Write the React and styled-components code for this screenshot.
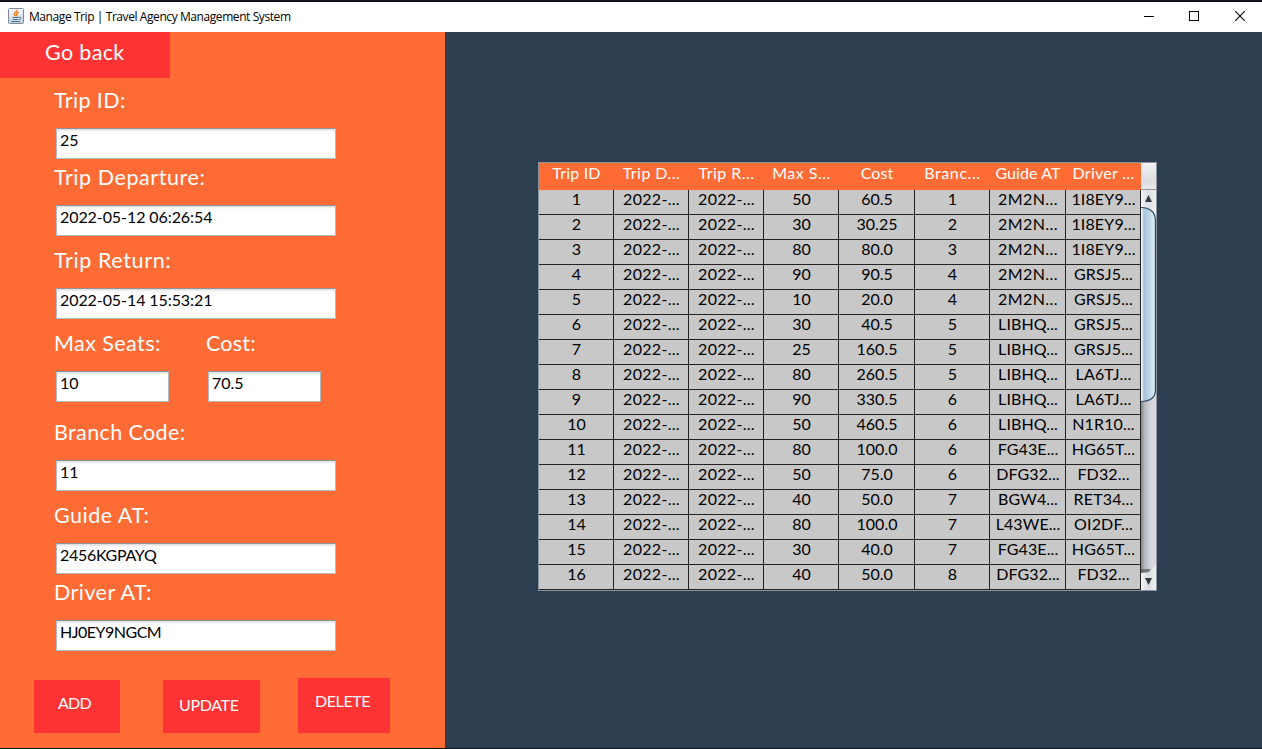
import React from "react";
import styled, { createGlobalStyle } from "styled-components";

const Global = createGlobalStyle`
  * { box-sizing: border-box; }
  body { margin: 0; overflow: hidden; background: #0d1018; }
`;

const Window = styled.div`
  width: 1262px;
  height: 749px;
  padding: 2px 0 1px;
  background: #10121b;
  display: flex;
  flex-direction: column;
  font-family: Lato, "Open Sans", sans-serif;
`;

const TitleBar = styled.header`
  height: 30px;
  flex: none;
  background: #fff;
  display: flex;
  align-items: flex-start;
  padding: 6px 0 0 8px;
`;

const Title = styled.div`
  flex: 1;
  margin: 1px 0 0 5px;
  font: 12px/16px "Open Sans", sans-serif;
  letter-spacing: ${(p) => p.$spacing}px;
  color: #000;
  white-space: pre;
`;

const WindowButton = styled.div`
  width: ${(p) => p.$w}px;
  height: 16px;
  display: flex;
  align-items: center;
`;

const Body = styled.main`
  flex: 1;
  min-height: 0;
  display: flex;
`;

const FormPanel = styled.section`
  width: 445px;
  background: #ff6b35;
`;

const TablePanel = styled.section`
  flex: 1;
  background: #2d3e50;
  padding: 130px 0 0 93px;
`;

const Button = styled.div`
  width: ${(p) => p.$w}px;
  height: ${(p) => p.$h}px;
  padding: ${(p) => p.$pad};
  background: #ff3333;
  color: #fff;
  font-size: ${(p) => p.$size || 16}px;
  line-height: ${(p) => (p.$size ? 28 : 20)}px;
  letter-spacing: ${(p) => p.$spacing || 0}px;
  white-space: pre;
`;

const Form = styled.div`
  padding: 8px 0 0 56px;
`;

const Line = styled.div`
  display: flex;
  gap: 39px;
  margin-bottom: ${(p) => p.$after || 0}px;
`;

const Field = styled.div`
  width: ${(p) => p.$w}px;
`;

const Label = styled.div`
  height: 42px;
  margin-left: -2px;
  font-size: 21.5px;
  line-height: 28px;
  letter-spacing: ${(p) => p.$spacing || 0}px;
  color: #fff;
  white-space: pre;
`;

const Input = styled.div`
  height: 31px;
  padding: 1px 3px;
  border: 1px solid #b4babf;
  border-top: 1px solid #8e9499;
  background: linear-gradient(#d9dadb 0, #f5f5f5 2px, #fff 3px);
  font-size: 16px;
  line-height: 20px;
  letter-spacing: ${(p) => p.$spacing || 0}px;
  color: #000;
  white-space: pre;
`;

const Actions = styled.div`
  display: flex;
  align-items: flex-end;
  height: 82px;
  padding-left: 34px;
`;

const Spacer = styled.div`
  width: ${(p) => p.$w}px;
`;

const ScrollPane = styled.div`
  width: 619px;
  height: 429px;
  border: 1px solid #8f949b;
  display: flex;
`;

const Table = styled.div`
  width: 602px;
`;

const Row = styled.div`
  display: grid;
  grid-template-columns: 75px 75px 75px 75px 76px 75px 76px 75px;
`;

const HeadCell = styled.div`
  height: 27px;
  background: #ff6b35;
  color: #fff;
  font-size: 16px;
  line-height: 20px;
  letter-spacing: ${(p) => p.$spacing || 0}px;
  text-align: center;
  white-space: pre;
`;

const Cell = styled.div`
  height: 25px;
  padding-left: 1px;
  background: #c8c8c8;
  border-right: 1px solid #222;
  border-bottom: 1px solid #222;
  color: #000;
  font-size: 16px;
  line-height: 18px;
  letter-spacing: ${(p) => p.$spacing || 0}px;
  text-align: center;
  white-space: pre;
`;

const ScrollColumn = styled.div`
  width: 15px;
  display: flex;
  flex-direction: column;
`;

const Corner = styled.div`
  height: 27px;
  background: linear-gradient(#f3f3f5, #dcdde1 70%, #e9eaed);
  border-bottom: 1px solid #8f949b;
`;

const heads = [
  ["Trip ID", 0.2],
  ["Trip D...", 0.45],
  ["Trip R...", 0.45],
  ["Max S...", 0.5],
  ["Cost", 0.1],
  ["Branc...", 0.6],
  ["Guide AT", 0.1],
  ["Driver ...", 0.3],
];

const trips = [
  ["50", "60.5", "1", "2M2N...", "1I8EY9..."],
  ["30", "30.25", "2", "2M2N...", "1I8EY9..."],
  ["80", "80.0", "3", "2M2N...", "1I8EY9..."],
  ["90", "90.5", "4", "2M2N...", "GRSJ5..."],
  ["10", "20.0", "4", "2M2N...", "GRSJ5..."],
  ["30", "40.5", "5", "LIBHQ...", "GRSJ5..."],
  ["25", "160.5", "5", "LIBHQ...", "GRSJ5..."],
  ["80", "260.5", "5", "LIBHQ...", "LA6TJ..."],
  ["90", "330.5", "6", "LIBHQ...", "LA6TJ..."],
  ["50", "460.5", "6", "LIBHQ...", "N1R10..."],
  ["80", "100.0", "6", "FG43E...", "HG65T..."],
  ["50", "75.0", "6", "DFG32...", "FD32..."],
  ["40", "50.0", "7", "BGW4...", "RET34..."],
  ["80", "100.0", "7", "L43WE...", "OI2DF..."],
  ["30", "40.0", "7", "FG43E...", "HG65T..."],
  ["40", "50.0", "8", "DFG32...", "FD32..."],
];

function TextField({ label, value, w = 280, ls, vs }) {
  return (
    <Field $w={w}>
      <Label $spacing={ls}>{label}</Label>
      <Input $spacing={vs}>{value}</Input>
    </Field>
  );
}

function JavaIcon() {
  return (
    <svg width="16" height="16" viewBox="0 0 16 16">
      <defs>
        <linearGradient id="tile" x1="0" y1="0" x2="0" y2="1">
          <stop offset="0" stopColor="#fafbfc" />
          <stop offset="1" stopColor="#c3d0dc" />
        </linearGradient>
      </defs>
      <rect x="0.5" y="0.5" width="15" height="15" rx="1" fill="url(#tile)" stroke="#7d8c9b" />
      <path d="M9 1.800c.7 1.600-3.400 2.700-2.700 4.600.2.700.9 1.200 1.200 1.900M10.700 4.200c-1.600.6-2.700 1.400-1.800 2.400.5.6.1 1.100-.4 1.600" fill="none" stroke="#ee7a18" strokeWidth="1.400" />
      <path d="M4.500 9.500h6.300M5 11.500h5.200M3.300 13.500h8.500M11.200 9.200c2.600-.5 2.400 2.100.1 2.400" fill="none" stroke="#4a7196" strokeWidth="1" />
    </svg>
  );
}

function ScrollBar() {
  return (
    <svg width="15" height="400" viewBox="0 0 15 400">
      <defs>
        <linearGradient id="track">
          <stop offset="0" stopColor="#84858b" />
          <stop offset=".25" stopColor="#b7b8be" />
          <stop offset=".6" stopColor="#d3d4da" />
          <stop offset="1" stopColor="#dadbe0" />
        </linearGradient>
        <linearGradient id="thumb">
          <stop offset="0" stopColor="#d8e7f2" />
          <stop offset=".1" stopColor="#f2f7fb" />
          <stop offset=".25" stopColor="#abc3d7" />
          <stop offset=".55" stopColor="#bcd3e4" />
          <stop offset="1" stopColor="#e2f2fb" />
        </linearGradient>
        <linearGradient id="cap">
          <stop offset="0" stopColor="#f4f5f7" />
          <stop offset=".5" stopColor="#dcdde2" />
          <stop offset="1" stopColor="#f3f3f6" />
        </linearGradient>
      </defs>
      <rect width="15" height="400" fill="url(#track)" />
      <path d="M0 0H15V28C14 21 8 17 0 17Z" fill="url(#cap)" />
      <path d="M-1 17.5C8 17.5 14.4 21 14.4 31V200C14.4 208 8 211.5 -1 211.5Z" fill="url(#thumb)" stroke="#2e4a62" strokeWidth="1.2" />
      <path d="M0 383Q9 383 15 375V400H0Z" fill="url(#cap)" />
      <path d="M0 379H9Q11 380 7 382.500H0Z" fill="#555960" opacity=".7" />
      <path d="M7.500 5L11 12H4Z" fill="#333a40" />
      <path d="M4 388H11L7.500 395Z" fill="#333a40" />
    </svg>
  );
}

export default function App() {
  return (
    <>
      <Global />
      <Window>
        <TitleBar>
          <JavaIcon />
          <Title $spacing={-0.42}>Manage Trip | Travel Agency Management System</Title>
          <WindowButton $w={45}>
            <svg width="10" height="10"><path d="M0 5.500H10" stroke="#000" /></svg>
          </WindowButton>
          <WindowButton $w={46}>
            <svg width="10" height="10"><rect x=".5" y=".5" width="9" height="9" fill="none" stroke="#000" /></svg>
          </WindowButton>
          <WindowButton $w={27}>
            <svg width="10" height="10"><path d="M0 0L10 10M10 0L0 10" stroke="#000" strokeWidth="1.1" /></svg>
          </WindowButton>
        </TitleBar>
        <Body>
          <FormPanel>
            <Button $w={170} $h={46} $size={21.5} $spacing={0.35} $pad="6px 0 0 45px">Go back</Button>
            <Form>
              <Line $after={4}><TextField label="Trip ID:" value="25" ls={0.4} /></Line>
              <Line $after={10}><TextField label="Trip Departure:" value="2022-05-12 06:26:54" ls={0.57} vs={-0.08} /></Line>
              <Line $after={10}><TextField label="Trip Return:" value="2022-05-14 15:53:21" ls={0.62} vs={-0.08} /></Line>
              <Line $after={16}>
                <TextField w={113} label="Max Seats:" value="10" ls={0.43} />
                <TextField w={113} label="Cost:" value="70.5" ls={0.2} />
              </Line>
              <Line $after={10}><TextField label="Branch Code:" value="11" ls={0.38} /></Line>
              <Line $after={4}><TextField label="Guide AT:" value="2456KGPAYQ" ls={0.5} vs={-0.3} /></Line>
              <Line><TextField label="Driver AT:" value="HJ0EY9NGCM" ls={0.43} vs={-0.5} /></Line>
            </Form>
            <Actions>
              <Button $w={86} $h={53} $spacing={-0.8} $pad="13px 0 0 24px">ADD</Button>
              <Spacer $w={43} />
              <Button $w={97} $h={53} $spacing={-0.35} $pad="15px 0 0 16px">UPDATE</Button>
              <Spacer $w={38} />
              <Button $w={92} $h={55} $spacing={-0.4} $pad="13px 0 0 17px">DELETE</Button>
            </Actions>
          </FormPanel>
          <TablePanel>
            <ScrollPane>
              <Table>
                <Row>
                  {heads.map(([text, spacing]) => (
                    <HeadCell key={text} $spacing={spacing}>{text}</HeadCell>
                  ))}
                </Row>
                {trips.map(([seats, cost, branch, guide, driver], i) => (
                  <Row key={i}>
                    <Cell>{i + 1}</Cell>
                    <Cell $spacing={0.3}>2022-...</Cell>
                    <Cell $spacing={0.3}>2022-...</Cell>
                    <Cell>{seats}</Cell>
                    <Cell>{cost}</Cell>
                    <Cell>{branch}</Cell>
                    <Cell $spacing={guide.startsWith("2") ? 0.4 : 0.1}>{guide}</Cell>
                    <Cell $spacing={0.15}>{driver}</Cell>
                  </Row>
                ))}
              </Table>
              <ScrollColumn>
                <Corner />
                <ScrollBar />
              </ScrollColumn>
            </ScrollPane>
          </TablePanel>
        </Body>
      </Window>
    </>
  );
}
